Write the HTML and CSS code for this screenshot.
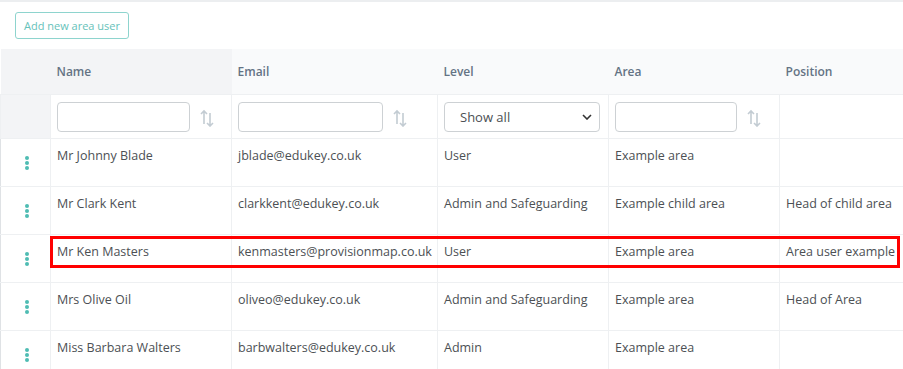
FILE: index.html
```html
<!DOCTYPE html>
<html lang="en">
<head>
    <meta charset="UTF-8">
    <title>Area users</title>
    <link rel="stylesheet" href="styles.css">
</head>
<body>

    <div class="toolbar">
        <button class="btn-outline">Add new area user</button>
    </div>

    <table class="users">
        <colgroup>
            <col class="c-menu">
            <col class="c-name">
            <col class="c-email">
            <col class="c-level">
            <col class="c-area">
            <col class="c-pos">
        </colgroup>
        <thead>
            <tr class="head-row">
                <th class="menu-cell"></th>
                <th class="sorted">Name</th>
                <th>Email</th>
                <th>Level</th>
                <th>Area</th>
                <th>Position</th>
            </tr>
            <tr class="filter-row">
                <td class="menu-cell"></td>
                <td>
                    <div class="filter">
                        <input type="text" class="filter-input">
                        <svg class="sort" width="14" height="18" viewBox="0 0 14 18"><path d="M4 15V2M1 5l3-3 3 3" /><path d="M10 4v13M7 14l3 3 3-3" /></svg>
                    </div>
                </td>
                <td>
                    <div class="filter">
                        <input type="text" class="filter-input email-input">
                        <svg class="sort" width="14" height="18" viewBox="0 0 14 18"><path d="M4 15V2M1 5l3-3 3 3" /><path d="M10 4v13M7 14l3 3 3-3" /></svg>
                    </div>
                </td>
                <td>
                    <div class="select-wrap">
                        <select class="filter-select">
                            <option>Show all</option>
                            <option>User</option>
                            <option>Admin</option>
                            <option>Admin and Safeguarding</option>
                        </select>
                        <svg class="chevron" width="10" height="6" viewBox="0 0 10 6"><path d="M1 1l4 4 4-4" /></svg>
                    </div>
                </td>
                <td>
                    <div class="filter">
                        <input type="text" class="filter-input area-input">
                        <svg class="sort" width="14" height="18" viewBox="0 0 14 18"><path d="M4 15V2M1 5l3-3 3 3" /><path d="M10 4v13M7 14l3 3 3-3" /></svg>
                    </div>
                </td>
                <td></td>
            </tr>
        </thead>
        <tbody>
            <tr>
                <td class="menu-cell"><div class="dots"><i></i><i></i><i></i></div></td>
                <td>Mr Johnny Blade</td>
                <td>jblade@edukey.co.uk</td>
                <td>User</td>
                <td>Example area</td>
                <td></td>
            </tr>
            <tr>
                <td class="menu-cell"><div class="dots"><i></i><i></i><i></i></div></td>
                <td>Mr Clark Kent</td>
                <td>clarkkent@edukey.co.uk</td>
                <td>Admin and Safeguarding</td>
                <td>Example child area</td>
                <td>Head of child area</td>
            </tr>
            <tr class="marked">
                <td class="menu-cell"><div class="dots"><i></i><i></i><i></i></div></td>
                <td>Mr Ken Masters<span class="highlight"></span></td>
                <td>kenmasters@provisionmap.co.uk</td>
                <td>User</td>
                <td>Example area</td>
                <td>Area user example</td>
            </tr>
            <tr>
                <td class="menu-cell"><div class="dots"><i></i><i></i><i></i></div></td>
                <td>Mrs Olive Oil</td>
                <td>oliveo@edukey.co.uk</td>
                <td>Admin and Safeguarding</td>
                <td>Example area</td>
                <td>Head of Area</td>
            </tr>
            <tr>
                <td class="menu-cell"><div class="dots"><i></i><i></i><i></i></div></td>
                <td>Miss Barbara Walters</td>
                <td>barbwalters@edukey.co.uk</td>
                <td>Admin</td>
                <td>Example area</td>
                <td></td>
            </tr>
        </tbody>
    </table>

</body>
</html>
```

FILE: styles.css
```css
/* Global */
body {
    margin: 0;
    font-family: "Open Sans", "Liberation Sans", sans-serif;
    font-size: 12.5px;
    color: #4c5054;
    background: #fff;
    border-top: 2px solid #eceef0;
    overflow: hidden;
}

/* Toolbar */
.toolbar {
    padding: 10px 15px 10px;
    height: 27px;
}

.btn-outline {
    font-family: inherit;
    font-size: 11px;
    color: #66c2ba;
    background: #fff;
    border: 1px solid #8ed4ce;
    border-radius: 3px;
    height: 27px;
    width: 114px;
    padding: 0;
    cursor: pointer;
}

/* Table */
.users {
    border-collapse: collapse;
    table-layout: fixed;
    width: 1000px;
}

.c-menu { width: 50px; }
.c-name { width: 181px; }
.c-email { width: 206px; }
.c-level { width: 171px; }
.c-area { width: 171px; }
.c-pos { width: 221px; }

.users th,
.users td {
    border: 1px solid #eef0f2;
    padding: 0 6px;
    text-align: left;
    vertical-align: top;
    white-space: nowrap;
    overflow: hidden;
}

/* Header */
.head-row th {
    height: 45px;
    vertical-align: middle;
    background: #f9fafb;
    color: #647384;
    font-size: 12px;
    font-weight: 600;
    border-top: none;
    border-left: none;
    border-right: none;
}

.head-row th.sorted,
.head-row th.menu-cell {
    background: #f3f4f6;
}

.filter-row td {
    height: 43px;
    vertical-align: middle;
    background: #fff;
}

.filter-row td.menu-cell {
    background: #f3f4f6;
}

.filter {
    display: flex;
    align-items: center;
    gap: 10px;
}

.filter-input {
    width: 133px;
    height: 30px;
    box-sizing: border-box;
    border: 1px solid #cdd1d4;
    border-radius: 4px;
    font-family: inherit;
}

.email-input { width: 145px; }
.area-input { width: 122px; }

.sort {
    fill: none;
    stroke: #c3ccd3;
    stroke-width: 1.6;
    margin-top: 2px;
}

.select-wrap {
    position: relative;
    width: 156px;
}

.filter-select {
    appearance: none;
    width: 100%;
    height: 30px;
    border: 1px solid #cdd1d4;
    border-radius: 4px;
    background: #fff;
    font-family: inherit;
    font-size: 13px;
    color: #4c5054;
    padding: 0 15px;
}

.chevron {
    position: absolute;
    right: 8px;
    top: 12px;
    fill: none;
    stroke: #333;
    stroke-width: 1.6;
}

/* Rows */
.users tbody td {
    height: 48px;
    padding-top: 8px;
    box-sizing: border-box;
}

.users tbody td.menu-cell {
    vertical-align: middle;
    padding: 0;
    border-left: 1px solid #dfe2e5;
}

.dots {
    display: flex;
    flex-direction: column;
    gap: 1px;
    width: 4px;
    margin: 0 auto;
    position: relative;
    left: 1px;
    top: 0;
}

.dots i {
    width: 4px;
    height: 4px;
    border-radius: 50%;
    background: #4fbcb3;
}

/* Red annotation box */
.marked td:nth-child(2) {
    position: relative;
    overflow: visible;
}

.highlight {
    position: absolute;
    left: -1px;
    top: 1px;
    width: 850px;
    height: 32px;
    border: 3px solid #f00;
    box-sizing: border-box;
    pointer-events: none;
}
```
